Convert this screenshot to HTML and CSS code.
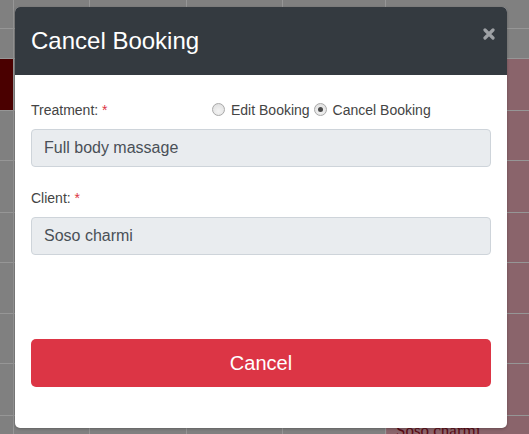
FILE: index.html
```html
<!DOCTYPE html>
<html lang="en">
<head>
<meta charset="utf-8">
<title>Cancel Booking</title>
<link rel="stylesheet" href="styles.css">
</head>
<body>
<div class="calendar">
  <div class="cell"></div><div class="cell"></div><div class="cell"></div><div class="cell"></div><div class="cell"></div><div class="cell"></div>
  <div class="cell"></div><div class="cell"></div><div class="cell"></div><div class="cell"></div><div class="cell"></div><div class="cell"></div>
  <div class="cell dark"></div><div class="cell"></div><div class="cell"></div><div class="cell"></div><div class="cell"></div><div class="cell event"></div>
  <div class="cell"></div><div class="cell"></div><div class="cell"></div><div class="cell"></div><div class="cell"></div><div class="cell event"></div>
  <div class="cell"></div><div class="cell"></div><div class="cell"></div><div class="cell"></div><div class="cell"></div><div class="cell event"></div>
  <div class="cell"></div><div class="cell"></div><div class="cell"></div><div class="cell"></div><div class="cell"></div><div class="cell event"></div>
  <div class="cell"></div><div class="cell"></div><div class="cell"></div><div class="cell"></div><div class="cell"></div><div class="cell event"></div>
  <div class="cell"></div><div class="cell"></div><div class="cell"></div><div class="cell"></div><div class="cell"></div><div class="cell event"></div>
  <div class="cell"></div><div class="cell"></div><div class="cell"></div><div class="cell"></div><div class="cell"></div><div class="cell event"></div>
  <div class="cell"></div><div class="cell"></div><div class="cell"></div><div class="cell"></div><div class="cell"></div><div class="cell event"><span class="event-text">Soso charmi</span></div>
</div>

<div class="modal">
  <div class="modal-header">
    <h2 class="modal-title">Cancel Booking</h2>
    <span class="close">
      <svg width="12" height="12" viewBox="0 0 12 12"><path d="M2 2 L10 10 M10 2 L2 10" stroke="#9ea1a5" stroke-width="3.2" stroke-linecap="round" fill="none"/></svg>
    </span>
  </div>
  <div class="modal-body">
    <div class="label-row">
      <span class="label">Treatment: <span class="req">*</span></span>
      <span class="radio-group">
        <span class="radio"></span><span class="radio-text">Edit Booking</span>
        <span class="radio checked"></span><span class="radio-text">Cancel Booking</span>
      </span>
    </div>
    <div class="field">Full body massage</div>

    <div class="label-row group2">
      <span class="label">Client: <span class="req">*</span></span>
    </div>
    <div class="field">Soso charmi</div>

    <button class="btn-cancel">Cancel</button>
  </div>
</div>
</body>
</html>
```

FILE: styles.css
```css
html, body {
  margin: 0;
  padding: 0;
}
body {
  width: 529px;
  height: 434px;
  overflow: hidden;
  position: relative;
  font-family: "Liberation Sans", Arial, sans-serif;
  background: #9a9a9a;
}
.calendar {
  display: grid;
  grid-template-columns: 13px 75px 96px 95px 102px 1fr;
  grid-template-rows: 28px 29px 51px 49px 51px 49px 50px 49px 51px 1fr;
  column-gap: 1px;
  row-gap: 1px;
  height: 434px;
  background: #969696;
}
.cell {
  background: #808080;
}
.cell.dark {
  background: #4a0000;
}
.cell.event {
  background: #8a646b;
  border-left: 1px solid #8f6a71;
}
.event-text {
  display: block;
  padding: 5px 0 0 9px;
  font-family: "Liberation Serif", "Times New Roman", serif;
  font-size: 17px;
  color: #5a0a14;
}
.modal {
  position: absolute;
  left: 15px;
  top: 7px;
  width: 492px;
  background: #fff;
  border-radius: 5px;
  overflow: hidden;
  box-shadow: 0 1px 3px rgba(0,0,0,0.25);
}
.modal-header {
  background: #343a40;
  height: 68px;
  padding: 0 12px 0 16px;
  display: flex;
  justify-content: space-between;
  align-items: center;
}
.modal-title {
  margin: 0;
  font-size: 24px;
  line-height: 36px;
  font-weight: 400;
  color: #fff;
}
.close {
  align-self: flex-start;
  margin-top: 21px;
  width: 12px;
  height: 12px;
  display: flex;
}
.modal-body {
  padding: 25px 16px 41px;
}
.label-row {
  display: flex;
  align-items: center;
  height: 21px;
  font-size: 14px;
  line-height: 21px;
  color: #444;
}
.label {
  width: 181px;
}
.req {
  color: #dc3545;
}
.radio-group {
  display: flex;
  align-items: center;
}
.radio {
  width: 11px;
  height: 11px;
  border-radius: 50%;
  border: 1px solid #a9a9a9;
  background: radial-gradient(circle at 50% 65%, #f4f4f4 0%, #dcdcdc 100%);
  margin-right: 6px;
  margin-top: -3px;
  position: relative;
  box-sizing: content-box;
}
.radio.checked::after {
  content: "";
  position: absolute;
  left: 3px;
  top: 3px;
  width: 5px;
  height: 5px;
  border-radius: 50%;
  background: #4a4a4a;
}
.radio-text {
  margin-right: 4px;
}
.field {
  margin-top: 8px;
  height: 38px;
  box-sizing: border-box;
  border: 1px solid #ced4da;
  border-radius: 4px;
  background: #e9ecef;
  padding: 0 12px;
  display: flex;
  align-items: center;
  font-size: 16px;
  color: #495057;
}
.group2 {
  margin-top: 21px;
}
.btn-cancel {
  display: block;
  width: 100%;
  margin-top: 84px;
  height: 48px;
  border: none;
  border-radius: 5px;
  background: #dc3545;
  color: #fff;
  font-family: "Liberation Sans", Arial, sans-serif;
  font-size: 20px;
  padding: 0;
}
```
